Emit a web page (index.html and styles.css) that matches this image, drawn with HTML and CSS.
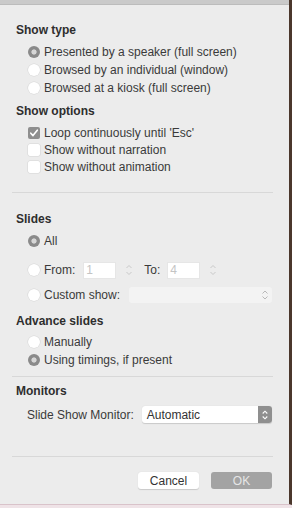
FILE: index.html
```html
<!DOCTYPE html>
<html lang="en">
<head>
    <meta charset="UTF-8">
    <meta name="viewport" content="width=device-width, initial-scale=1.0">
    <title>Set Up Show</title>
    <link rel="stylesheet" href="styles.css">
</head>
<body>
    <div class="dialog">
        <div class="titlebar"></div>

        <h3 class="heading first">Show type</h3>
        <div class="options">
            <div class="row"><span class="radio on"></span>Presented by a speaker (full screen)</div>
            <div class="row"><span class="radio"></span>Browsed by an individual (window)</div>
            <div class="row"><span class="radio"></span>Browsed at a kiosk (full screen)</div>
        </div>

        <h3 class="heading">Show options</h3>
        <div class="options checks">
            <div class="row"><span class="check on"><svg width="12" height="12" viewBox="0 0 12 12"><path d="M2.8 6.2 L5 8.6 L9.3 3.2" fill="none" stroke="#fff" stroke-width="1.6" stroke-linecap="round" stroke-linejoin="round"/></svg></span>Loop continuously until 'Esc'</div>
            <div class="row"><span class="check"></span>Show without narration</div>
            <div class="row"><span class="check"></span>Show without animation</div>
        </div>

        <hr class="sep sep-options">

        <h3 class="heading slides-head">Slides</h3>
        <div class="options">
            <div class="row"><span class="radio on"></span>All</div>
            <div class="row range">
                <span class="radio"></span>From:
                <span class="field">1</span>
                <svg class="stepper" width="8" height="14" viewBox="0 0 8 14"><path d="M1.5 5 L4 2.5 L6.5 5 M1.5 9 L4 11.5 L6.5 9" fill="none" stroke="#c9c9c9" stroke-width="1"/></svg>
                <span class="to">To:</span>
                <span class="field">4</span>
                <svg class="stepper" width="8" height="14" viewBox="0 0 8 14"><path d="M1.5 5 L4 2.5 L6.5 5 M1.5 9 L4 11.5 L6.5 9" fill="none" stroke="#c9c9c9" stroke-width="1"/></svg>
            </div>
            <div class="row custom">
                <span class="radio"></span>Custom show:
                <span class="select disabled">
                    <svg width="8" height="12" viewBox="0 0 8 12"><path d="M1.5 4.5 L4 2 L6.5 4.5 M1.5 7.5 L4 10 L6.5 7.5" fill="none" stroke="#b8b8b8" stroke-width="1"/></svg>
                </span>
            </div>
        </div>

        <h3 class="heading advance-head">Advance slides</h3>
        <div class="options">
            <div class="row"><span class="radio"></span>Manually</div>
            <div class="row"><span class="radio on"></span>Using timings, if present</div>
        </div>

        <hr class="sep sep-advance">

        <h3 class="heading monitors-head">Monitors</h3>
        <div class="monitor-row">
            <span>Slide Show Monitor:</span>
            <span class="select monitor">
                Automatic
                <span class="arrows"><svg width="8" height="12" viewBox="0 0 8 12"><path d="M1.7 4.5 L4 2.2 L6.3 4.5 M1.7 7.5 L4 9.8 L6.3 7.5" fill="none" stroke="#fff" stroke-width="1.1"/></svg></span>
            </span>
        </div>

        <hr class="sep sep-monitors">

        <div class="buttons">
            <button class="btn cancel">Cancel</button>
            <button class="btn ok">OK</button>
        </div>
    </div>
</body>
</html>
```

FILE: styles.css
```css
body {
    margin: 0;
    background-color: #efe3e7;
    font-family: "Liberation Sans", Arial, sans-serif;
    font-size: 12px;
    color: #3a3a3a;
}

.dialog {
    width: 289px;
    height: 504px;
    background-color: #ececec;
    border-right: 3px solid #4b372c;
    border-bottom: 1px solid #d9c3ca;
    display: flex;
    flex-direction: column;
}

.titlebar {
    height: 4px;
    background-color: #cacaca;
    border-bottom: 1px solid #bcbcbc;
}

.heading {
    margin: 6px 0 0 16px;
    font-size: 12px;
    font-weight: bold;
    line-height: 16px;
    color: #2e2e2e;
}

.heading.first {
    margin-top: 17px;
}

.options {
    margin-top: 5px;
    padding: 0 17px 0 28px;
}

.row {
    display: flex;
    align-items: center;
    height: 18px;
}

.checks .row {
    height: 17px;
}

.radio {
    width: 12px;
    height: 12px;
    margin-right: 4px;
    border-radius: 50%;
    background-color: #fff;
    box-shadow: 0 0 0 0.5px #d4d4d4;
    flex-shrink: 0;
}

.radio.on {
    background: radial-gradient(circle, #d6d6d6 0, #d6d6d6 2.2px, #8a8a8a 3px);
    box-shadow: none;
}

.check {
    width: 12px;
    height: 12px;
    margin-right: 4px;
    border-radius: 2px;
    background-color: #fff;
    box-shadow: 0 0 0 0.5px #d4d4d4;
    flex-shrink: 0;
}

.check.on {
    background-color: #8e8e8e;
    box-shadow: none;
}

.check svg {
    display: block;
}

.sep {
    margin: 0 16px 0 12px;
    border: none;
    border-top: 1px solid #d8d8d8;
}

.sep-options {
    margin-top: 17px;
}

.slides-head {
    margin-top: 18px;
}

.range {
    margin-top: 9px;
    height: 22px;
}

.field {
    width: 33px;
    height: 17px;
    margin-left: 8px;
    padding-left: 2px;
    box-sizing: border-box;
    background-color: #fff;
    border: 1px solid #e6e6e6;
    color: #c4c4c4;
    line-height: 15px;
}

.stepper {
    margin-left: 9px;
}

.to {
    margin-left: 11px;
}

.range .to + .field {
    margin-left: 7px;
}

.custom {
    margin-top: 5px;
    height: 17px;
}

.select {
    display: flex;
    align-items: center;
    box-sizing: border-box;
    height: 16px;
    border-radius: 3px;
}

.select.disabled {
    flex: 1;
    margin-left: 9px;
    background-color: #f3f3f3;
    justify-content: flex-end;
    padding-right: 3px;
}

.advance-head {
    margin-top: 10px;
}

.advance-head + .options {
    margin-top: 4px;
}

.sep-advance {
    margin-top: 7px;
}

.monitor-row {
    display: flex;
    align-items: center;
    margin: 7px 17px 0 27px;
    height: 17px;
}

.select.monitor {
    flex: 1;
    height: 17px;
    margin-left: 8px;
    padding-left: 5px;
    background-color: #fff;
    color: #333;
    box-shadow: 0 0.5px 1px rgba(0, 0, 0, 0.15);
    justify-content: space-between;
}

.arrows {
    width: 14px;
    height: 17px;
    display: flex;
    align-items: center;
    justify-content: center;
    background-color: #8f8f8f;
    border-radius: 0 3px 3px 0;
}

.sep-monitors {
    margin-top: 33px;
}

.buttons {
    display: flex;
    justify-content: flex-end;
    gap: 12px;
    margin: 15px 17px 0 0;
}

.btn {
    width: 61px;
    height: 17px;
    border: none;
    border-radius: 3px;
    font-family: "Liberation Sans", Arial, sans-serif;
    font-size: 12px;
    padding: 0;
}

.cancel {
    background-color: #fff;
    color: #333;
    box-shadow: 0 0.5px 1px rgba(0, 0, 0, 0.15);
}

.ok {
    background-color: #a3a3a3;
    color: #e6e6e6;
}
```
